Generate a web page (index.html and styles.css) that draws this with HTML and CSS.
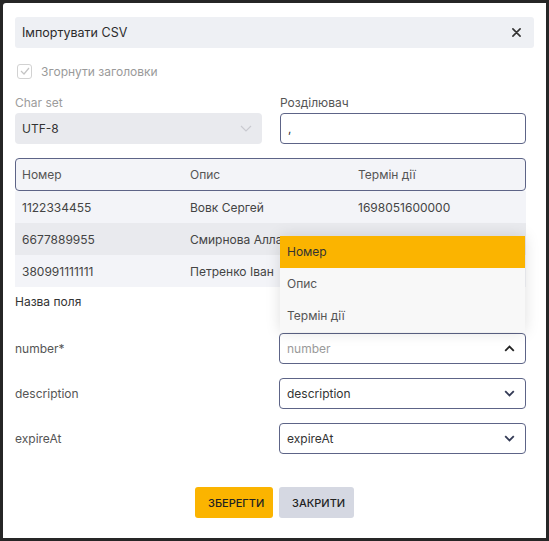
FILE: index.html
```html
<!DOCTYPE html>
<html lang="uk">
<head>
    <meta charset="UTF-8">
    <meta name="viewport" content="width=device-width, initial-scale=1.0">
    <title>Імпортувати CSV</title>
    <link rel="stylesheet" href="styles.css">
</head>
<body>
    <div class="modal">
        <div class="modal-header">
            <span class="modal-title">Імпортувати CSV</span>
            <button class="close-x" aria-label="Закрити">
                <svg width="9" height="9" viewBox="0 0 10 10"><path d="M1 1L9 9M9 1L1 9" stroke="#333" stroke-width="1.8" stroke-linecap="round"/></svg>
            </button>
        </div>

        <div class="modal-body">
            <label class="check-row">
                <span class="checkbox">
                    <svg width="10" height="8" viewBox="0 0 10 8"><path d="M1 4L4 7L9 1" fill="none" stroke="#c4c4c4" stroke-width="1.2"/></svg>
                </span>
                <span class="check-label">Згорнути заголовки</span>
            </label>

            <div class="two-cols">
                <div class="field">
                    <div class="field-label muted">Char set</div>
                    <div class="select disabled">
                        <span>UTF-8</span>
                        <svg width="12" height="7" viewBox="0 0 12 7"><path d="M1 1L6 6L11 1" fill="none" stroke="#c9cad0" stroke-width="1.2"/></svg>
                    </div>
                </div>
                <div class="field">
                    <div class="field-label">Розділювач</div>
                    <div class="input">,</div>
                </div>
            </div>

            <div class="table">
                <div class="table-head">
                    <div>Номер</div>
                    <div>Опис</div>
                    <div>Термін дії</div>
                </div>
                <div class="table-row">
                    <div>1122334455</div>
                    <div>Вовк Сергей</div>
                    <div>1698051600000</div>
                </div>
                <div class="table-row alt">
                    <div>6677889955</div>
                    <div>Смирнова Алла</div>
                    <div></div>
                </div>
                <div class="table-row">
                    <div>380991111111</div>
                    <div>Петренко Іван</div>
                    <div></div>
                </div>
            </div>

            <div class="section-title">Назва поля</div>

            <div class="mapping">
                <div class="map-label">number*</div>
                <div class="select outlined open">
                    <span class="placeholder">number</span>
                    <svg width="11" height="7" viewBox="0 0 11 7"><path d="M1.2 5.8L5.5 1.5L9.8 5.8" fill="none" stroke="#222" stroke-width="1.8"/></svg>
                    <ul class="dropdown">
                        <li class="active">Номер</li>
                        <li>Опис</li>
                        <li>Термін дії</li>
                    </ul>
                </div>

                <div class="map-label">description</div>
                <div class="select outlined">
                    <span>description</span>
                    <svg width="11" height="7" viewBox="0 0 11 7"><path d="M1.2 1.2L5.5 5.5L9.8 1.2" fill="none" stroke="#333a55" stroke-width="1.8"/></svg>
                </div>

                <div class="map-label">expireAt</div>
                <div class="select outlined">
                    <span>expireAt</span>
                    <svg width="11" height="7" viewBox="0 0 11 7"><path d="M1.2 1.2L5.5 5.5L9.8 1.2" fill="none" stroke="#333a55" stroke-width="1.8"/></svg>
                </div>
            </div>
        </div>

        <div class="modal-footer">
            <button class="btn btn-primary">Зберегти</button>
            <button class="btn btn-secondary">Закрити</button>
        </div>
    </div>
</body>
</html>
```

FILE: styles.css
```css
body {
    margin: 0;
    padding: 3px;
    background-color: #262626;
    font-family: "Inter", "Noto Sans", sans-serif;
    font-size: 12px;
    color: #3a3a3a;
}
.modal {
    box-sizing: border-box;
    width: 543px;
    height: 535px;
    background-color: #fff;
    border-radius: 3px 0 0 0;
    padding: 14px 12px 0 12px;
    display: flex;
    flex-direction: column;
}
.modal-header {
    width: 519px;
    height: 31px;
    box-sizing: border-box;
    background-color: #eef0f4;
    border-radius: 3px;
    display: flex;
    align-items: center;
    justify-content: space-between;
    padding: 0 13px 0 7px;
}
.modal-title {
    font-size: 12.5px;
    color: #2c2c2c;
}
.close-x {
    border: none;
    background: none;
    padding: 0;
    display: flex;
    cursor: pointer;
}
.modal-body {
    width: 511px;
}
.check-row {
    display: flex;
    align-items: center;
    gap: 9px;
    margin-top: 15px;
    padding-left: 2px;
    height: 16px;
}
.checkbox {
    box-sizing: border-box;
    width: 15px;
    height: 15px;
    border: 1px solid #d2d2d2;
    border-radius: 3px;
    display: flex;
    align-items: center;
    justify-content: center;
}
.check-label {
    color: #9a9a9a;
}
.two-cols {
    display: grid;
    grid-template-columns: 247px 246px;
    column-gap: 18px;
    margin-top: 16px;
}
.field-label {
    height: 18px;
    line-height: 16px;
    color: #555;
}
.field-label.muted {
    color: #9c9c9c;
}
.select,
.input {
    box-sizing: border-box;
    height: 31px;
    border-radius: 4px;
    display: flex;
    align-items: center;
    justify-content: space-between;
    padding: 0 10px 0 7px;
    position: relative;
}
.select.disabled {
    background-color: #e9eaee;
    color: #333;
    padding-right: 10px;
}
.input {
    border: 1px solid #5d6487;
    color: #333;
}
.table {
    margin-top: 14px;
}
.table-head,
.table-row {
    display: grid;
    grid-template-columns: 168px 168px 1fr;
    height: 32px;
    align-items: center;
    padding-left: 7px;
    background-color: #f3f4f8;
}
.table-head {
    box-sizing: border-box;
    height: 33px;
    border: 1px solid #5d6487;
    border-radius: 4px;
    padding-left: 6px;
    color: #555;
}
.table-row {
    color: #444;
}
.table-row.alt {
    background-color: #e9eaee;
}
.section-title {
    margin-top: 7px;
    height: 16px;
    line-height: 16px;
    color: #333;
}
.mapping {
    display: grid;
    grid-template-columns: 264px 247px;
    row-gap: 14px;
    margin-top: 23px;
    align-items: center;
}
.map-label {
    color: #555;
}
.select.outlined {
    border: 1px solid #5d6487;
    color: #333;
}
.placeholder {
    color: #9a9a9a;
}
.dropdown {
    position: absolute;
    left: 0;
    right: 0;
    bottom: calc(100% + 2px);
    margin: 0;
    padding: 0;
    list-style: none;
    background-color: #f8f8f8;
    box-shadow: 0 0 14px rgba(0, 0, 0, 0.13);
    z-index: 10;
}
.dropdown li {
    height: 32px;
    line-height: 32px;
    padding-left: 7px;
    color: #555;
}
.dropdown li.active {
    background-color: #fbb400;
    color: #333;
}
.modal-footer {
    display: flex;
    justify-content: center;
    gap: 6px;
    margin-top: 33px;
}
.btn {
    height: 31px;
    border: none;
    border-radius: 3px;
    font-family: "Inter", "Noto Sans", sans-serif;
    font-size: 11px;
    font-weight: 500;
    text-transform: uppercase;
    color: #222;
    padding: 0 13px;
    cursor: pointer;
}
.btn-primary {
    background-color: #fbb400;
    width: 78px;
}
.btn-secondary {
    background-color: #d5d8e2;
    width: 75px;
}
```
